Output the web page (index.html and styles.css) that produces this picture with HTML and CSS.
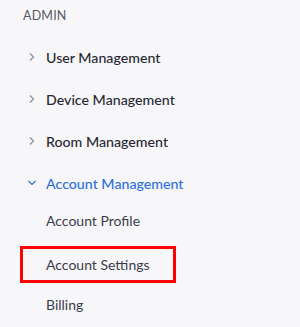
FILE: index.html
```html
<!DOCTYPE html>
<html lang="en">
<head>
  <meta charset="UTF-8">
  <title>Admin Menu</title>
  <link rel="stylesheet" href="styles.css">
</head>
<body>
  <nav class="sidebar">
    <div class="section-title">ADMIN</div>
    <ul class="menu">
      <li class="menu-item"><span class="chevron"><svg width="6" height="8" viewBox="0 0 6 8"><path d="M1 0.5 L4.5 4 L1 7.5" fill="none" stroke="#8a8f99" stroke-width="1.2"/></svg></span>User Management</li>
      <li class="menu-item"><span class="chevron"><svg width="6" height="8" viewBox="0 0 6 8"><path d="M1 0.5 L4.5 4 L1 7.5" fill="none" stroke="#8a8f99" stroke-width="1.2"/></svg></span>Device Management</li>
      <li class="menu-item"><span class="chevron"><svg width="6" height="8" viewBox="0 0 6 8"><path d="M1 0.5 L4.5 4 L1 7.5" fill="none" stroke="#8a8f99" stroke-width="1.2"/></svg></span>Room Management</li>
      <li class="menu-item open"><span class="chevron"><svg width="8" height="6" viewBox="0 0 8 6"><path d="M0.5 1 L4 4.5 L7.5 1" fill="none" stroke="#2d6fe0" stroke-width="1.2"/></svg></span>Account Management</li>
    </ul>
    <ul class="submenu">
      <li class="sub-item">Account Profile</li>
      <li class="sub-item highlighted">Account Settings</li>
      <li class="sub-item">Billing</li>
    </ul>
  </nav>
</body>
</html>
```

FILE: styles.css
```css
body { margin: 0; background: #f7f7fa; font-family: Lato, "Open Sans", sans-serif; }
.sidebar { padding: 8px 0 0 23px; }
.section-title { font-size: 12.5px; color: #555966; line-height: 16px; letter-spacing: 0.2px; }
.menu, .submenu { list-style: none; margin: 0; padding: 0; }
.menu { margin-top: 12px; }
.menu-item { display: flex; align-items: center; height: 42px; font-size: 14.2px; font-weight: 500; color: #282833; }
.chevron { width: 23px; display: flex; padding-left: 6px; box-sizing: border-box; }
.open { color: #2d6fe0; }
.open .chevron { padding-left: 5px; }
.submenu { margin: -2px 0 0 -3px; }
.sub-item { height: 37px; display: flex; align-items: center; padding-left: 26px; font-size: 14px; color: #3b3c4a; }
.highlighted { border: 3px solid #f00; box-sizing: border-box; width: 156px; padding-left: 23px; margin: 7px 0 3px; }
```
